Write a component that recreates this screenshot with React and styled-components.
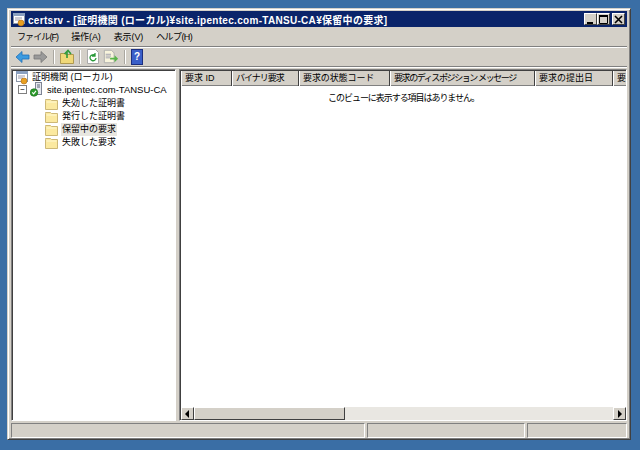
import React from 'react'
import styled, { createGlobalStyle } from 'styled-components'

const GlobalStyle = createGlobalStyle`
  html, body { margin: 0; padding: 0; background: #3a6ea5; }
  body { width: 640px; height: 450px; overflow: hidden; font-family: "Liberation Sans", "Noto Sans CJK JP", sans-serif; font-size: 9px; color: #000; }
`

const columns = [
  { label: '要求 ID', width: 51, spacing: 0 },
  { label: 'バイナリ要求', width: 67, spacing: -1 },
  { label: '要求の状態コード', width: 91, spacing: -0.1 },
  { label: '要求のディスポジション メッセージ', width: 145, spacing: -1.4 },
  { label: '要求の提出日', width: 78, spacing: 0 },
  { label: '要求', width: 30, spacing: 0 },
]

const menus = [
  { label: 'ファイル(F)', spacing: -0.9 },
  { label: '操作(A)', spacing: -0.1 },
  { label: '表示(V)', spacing: -0.1 },
  { label: 'ヘルプ(H)', spacing: -0.6 },
]

const folders = ['失効した証明書', '発行した証明書', '保留中の要求', '失敗した要求']

function Folder() {
  return (
    <svg width="13" height="12" viewBox="0 0 13 12">
      <path d="M.5 2.5V1.5h5l1 1h6v9H.5z" fill="#fbe9a0" stroke="#cdb877" />
      <path d="M1.5 3.5h10v1h-10z" fill="#fff8d4" />
    </svg>
  )
}

function Arrow({ color, flip }) {
  return (
    <svg width="15" height="14" viewBox="0 0 15 14" style={{ transform: flip ? 'scaleX(-1)' : 'none' }}>
      <path d="M1 7l6-5.5V5h7v4H7v3.5z" fill={color} stroke={color === '#3c9be0' ? '#2070b8' : '#777'} strokeWidth=".8" />
    </svg>
  )
}

function AppIcon() {
  return (
    <svg width="15" height="15" viewBox="0 0 15 15">
      <rect x="1.500" y="1.500" width="11" height="10" fill="#fff" stroke="#8a96a8" />
      <rect x="1" y="1" width="12" height="3" fill="#8aa0c0" />
      <path d="M3 6h7M3 8h5" stroke="#99a" />
      <circle cx="9" cy="11" r="3" fill="#e8a020" stroke="#b06a10" strokeWidth=".6" />
    </svg>
  )
}

function ServerIcon() {
  return (
    <svg width="13" height="15" viewBox="0 0 13 15">
      <rect x="5.500" y="0.500" width="6" height="12" fill="#e6e8ee" stroke="#7d8494" />
      <path d="M7 3h3M7 5h3" stroke="#5a6478" />
      <circle cx="4" cy="10.500" r="3.800" fill="#2c9a2c" stroke="#156a15" strokeWidth=".6" />
      <path d="M2.200 10.400l1.400 1.500 2.400-3" fill="none" stroke="#fff" strokeWidth="1.100" />
    </svg>
  )
}

export default function App() {
  return (
    <Page>
      <GlobalStyle />
      <Win>
        <TitleBar>
          <AppIcon />
          <TitleText>certsrv - [証明機関 (ローカル)¥site.ipentec.com-TANSU-CA¥保留中の要求]</TitleText>
          <Caption>
            <CapBtn><svg width="9" height="9"><rect x="1" y="7" width="6" height="2" fill="#000" /></svg></CapBtn>
            <CapBtn><svg width="9" height="9"><path d="M.5 1.500h8v7h-8z" fill="none" stroke="#000" /><rect y="0" width="9" height="2" fill="#000" /></svg></CapBtn>
            <CapBtn $gap><svg width="9" height="9"><path d="M1 1l7 7M8 1l-7 7" stroke="#000" strokeWidth="1.600" /></svg></CapBtn>
          </Caption>
        </TitleBar>
        <MenuBar>
          {menus.map((m) => (
            <MenuItem key={m.label} $spacing={m.spacing}>{m.label}</MenuItem>
          ))}
        </MenuBar>
        <ToolBar>
          <Arrow color="#3c9be0" />
          <Arrow color="#9a9a9a" flip />
          <Sep />
          <svg width="14" height="15" viewBox="0 0 14 15">
            <path d="M.5 4.500h4l1 1h8v9H.5z" fill="#f0d878" stroke="#b09a50" />
            <path d="M7 9V3M4.500 5L8 1.500 11 5" fill="none" stroke="#2f9a38" strokeWidth="1.600" />
          </svg>
          <Sep />
          <svg width="14" height="15" viewBox="0 0 14 15">
            <path d="M1.500.5h8l3 3v11h-11z" fill="#fff" stroke="#aaa" />
            <path d="M10 9a3 3 0 1 1-1-2.500M9 4v3H6" fill="none" stroke="#2a9a3a" strokeWidth="1.300" />
          </svg>
          <svg width="16" height="15" viewBox="0 0 18 15">
            <path d="M1.500.5h8l3 3v11h-11z" fill="#f8f4dc" stroke="#aaa" />
            <path d="M3 5h6M3 7h6M3 9h5" stroke="#99a" />
            <path d="M8 9h5V6l4 4-4 4v-3H8z" fill="#58b548" />
          </svg>
          <Sep />
          <HelpBook>?</HelpBook>
        </ToolBar>
        <Panes>
          <TreePane>
            <TreeRow>
              <AppIcon />
              <TreeLabel>証明機関 (ローカル)</TreeLabel>
            </TreeRow>
            <CaRow>
              <Expander>−</Expander>
              <ServerIcon />
              <CaLabel>site.ipentec.com-TANSU-CA</CaLabel>
            </CaRow>
            {folders.map((name, i) => (
              <FolderRow key={name}>
                <Folder />
                <TreeLabel $selected={i === 2}>{name}</TreeLabel>
              </FolderRow>
            ))}
          </TreePane>
          <ListPane>
            <Header>
              {columns.map((c) => (
                <HeaderCell key={c.label} $w={c.width} $spacing={c.spacing}>{c.label}</HeaderCell>
              ))}
            </Header>
            <ListBody>このビューに表示する項目はありません。</ListBody>
            <ScrollBar>
              <ScrollBtn>
                <svg width="5" height="8"><path d="M4 0v8L0 4z" fill="#000" /></svg>
              </ScrollBtn>
              <Thumb />
              <Track />
              <ScrollBtn>
                <svg width="5" height="8"><path d="M1 0v8l4-4z" fill="#000" /></svg>
              </ScrollBtn>
            </ScrollBar>
          </ListPane>
        </Panes>
        <StatusBar>
          <StatusCell $w={354} />
          <StatusCell $w={158} />
          <StatusCell $w={100} />
        </StatusBar>
      </Win>
    </Page>
  )
}

const Page = styled.div`
  padding: 8px 9px 10px 7px;
  width: 640px;
  height: 450px;
  box-sizing: border-box;
`

const Win = styled.div`
  height: 100%;
  box-sizing: border-box;
  background: #d4d0c8;
  border: 1px solid #d4d0c8;
  border-right-color: #404040;
  border-bottom-color: #404040;
  box-shadow: inset 1px 1px 0 #fff, inset -1px -1px 0 #808080;
  padding: 2px 3px 1px 3px;
  display: flex;
  flex-direction: column;
`

const TitleBar = styled.div`
  height: 16px;
  flex: none;
  background: #0a246a;
  color: #fff;
  display: flex;
  align-items: center;
  padding: 0 2px 0 1px;
`

const TitleText = styled.div`
  flex: 1;
  margin-left: 1px;
  font-family: "Liberation Sans", "Noto Sans CJK JP", sans-serif;
  font-size: 10px;
  font-weight: bold;
  letter-spacing: .3px;
  white-space: nowrap;
  overflow: hidden;
`

const Caption = styled.div`
  display: flex;
`

const CapBtn = styled.div`
  width: 11px;
  height: 10px;
  margin-left: ${(p) => (p.$gap ? '2px' : '0')};
  background: #d4d0c8;
  border: 1px solid;
  border-color: #fff #404040 #404040 #fff;
  display: flex;
  align-items: center;
  justify-content: center;
`

const MenuBar = styled.div`
  height: 20px;
  flex: none;
  display: flex;
  align-items: center;
  padding-left: 6px;
  gap: 13px;
  border-bottom: 1px solid #808080;
  box-sizing: border-box;
  box-shadow: 0 1px 0 #fff;
`

const MenuItem = styled.div`
  font-size: 9px;
  letter-spacing: ${(p) => p.$spacing}px;
  white-space: nowrap;
`

const ToolBar = styled.div`
  height: 20px;
  flex: none;
  display: flex;
  align-items: center;
  gap: 3px;
  padding-left: 4px;
  border-bottom: 1px solid #808080;
  box-sizing: border-box;
  box-shadow: 0 1px 0 #fff;
`

const Sep = styled.div`
  width: 1px;
  height: 14px;
  background: #aaa7a0;
  border-right: 1px solid #fff;
  margin: 0 2px;
`

const HelpBook = styled.div`
  width: 10px;
  height: 14px;
  background: #3a5fc8;
  border: 1px solid #1c2f80;
  color: #fff;
  font-size: 10px;
  font-weight: bold;
  line-height: 14px;
  text-align: center;
`

const Panes = styled.div`
  flex: 1;
  display: flex;
  gap: 3px;
  margin-top: 2px;
  min-height: 0;
`

const TreePane = styled.div`
  width: 165px;
  flex: none;
  box-sizing: border-box;
  background: #fff;
  border: 1px solid;
  border-color: #808080 #fff #fff #808080;
  box-shadow: inset 1px 1px 0 #404040;
  padding: 1px 0 0 3px;
`

const TreeRow = styled.div`
  display: flex;
  align-items: center;
  height: 13px;
  gap: 1px;
`

const CaRow = styled(TreeRow)`
  margin: -1px 0 1px;
  padding-left: 3px;
`

const FolderRow = styled(TreeRow)`
  padding-left: 30px;
  gap: 3px;
`

const Expander = styled.div`
  width: 7px;
  height: 7px;
  border: 1px solid #808080;
  font-size: 8px;
  line-height: 7px;
  text-align: center;
  margin-right: 2px;
`

const TreeLabel = styled.div`
  font-size: 9px;
  line-height: 13px;
  padding: 0 1px;
  white-space: nowrap;
  background: ${(p) => (p.$selected ? '#e8e6e0' : 'transparent')};
`

const CaLabel = styled(TreeLabel)`
  margin-left: 2px;
  font-family: "Liberation Sans", sans-serif;
  font-size: 9.500px;
`

const ListPane = styled.div`
  flex: 1;
  min-width: 0;
  box-sizing: border-box;
  background: #fff;
  border: 1px solid;
  border-color: #808080 #fff #fff #808080;
  box-shadow: inset 1px 1px 0 #404040;
  padding: 1px 0 0 1px;
  display: flex;
  flex-direction: column;
`

const Header = styled.div`
  display: flex;
  height: 15px;
  flex: none;
  overflow: hidden;
  background: #d4d0c8;
  box-shadow: inset 0 -1px 0 #808080;
`

const HeaderCell = styled.div`
  flex: none;
  width: ${(p) => p.$w}px;
  letter-spacing: ${(p) => p.$spacing}px;
  box-sizing: border-box;
  padding-left: 3px;
  font-size: 9px;
  line-height: 14px;
  white-space: nowrap;
  overflow: hidden;
  border-right: 1px solid #404040;
  border-left: 1px solid #fff;

  &:last-child {
    border-right: none;
  }
`

const ListBody = styled.div`
  flex: 1;
  padding-top: 5px;
  text-align: center;
  font-size: 9px;
  letter-spacing: -1.050px;
  line-height: 14px;
`

const ScrollBar = styled.div`
  display: flex;
  height: 13px;
  flex: none;
`

const ScrollBtn = styled.div`
  width: 13px;
  flex: none;
  box-sizing: border-box;
  background: #d4d0c8;
  border: 1px solid;
  border-color: #fff #404040 #404040 #fff;
  display: flex;
  align-items: center;
  justify-content: center;
`

const Thumb = styled(ScrollBtn)`
  width: 151px;
`

const Track = styled.div`
  flex: 1;
  background: #e9e7e2;
`

const StatusBar = styled.div`
  display: flex;
  height: 15px;
  flex: none;
  margin-top: 2px;
  gap: 2px;
`

const StatusCell = styled.div`
  width: ${(p) => p.$w}px;
  flex: ${(p) => (p.$w === 100 ? 1 : 'none')};
  box-sizing: border-box;
  border: 1px solid;
  border-color: #808080 #fff #fff #808080;
`
